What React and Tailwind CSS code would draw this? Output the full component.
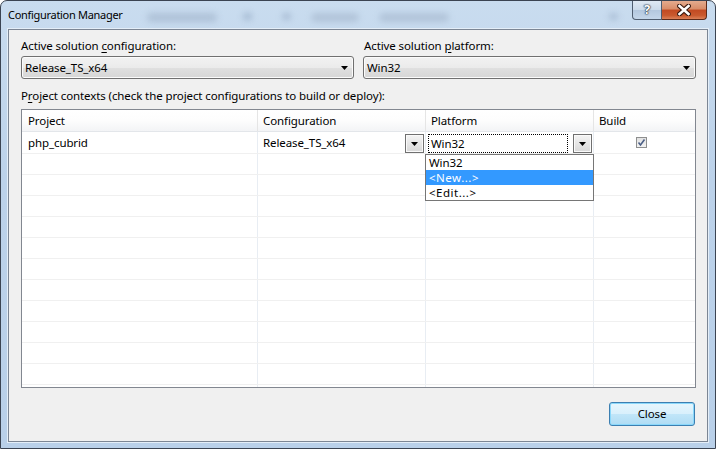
import React from "react";

function Tri() {
  return (
    <svg width="7" height="4" viewBox="0 0 7 4">
      <path d="M0 0H7L3.5 4Z" fill="#000" />
    </svg>
  );
}

function Combo({ value }) {
  return (
    <div className="h-[23px] w-[333px] rounded-[3px] border border-[#707070] bg-[linear-gradient(to_bottom,#f2f2f2_0%,#ebebeb_50%,#e0e0e0_50%,#d6d6d6_100%)] shadow-[inset_0_0_0_1px_#fbfbfb] flex items-center pl-[3px] pr-[5px]">
      <span className="flex-1 leading-[16px]">{value}</span>
      <Tri />
    </div>
  );
}

function CellButton() {
  return (
    <div className="w-[19px] h-[19px] border border-[#707070] bg-[linear-gradient(to_bottom,#f4f4f4_0%,#e6e6e6_50%,#d8d8d8_100%)] shadow-[inset_0_0_0_1px_#fafafa] flex items-center justify-center">
      <Tri />
    </div>
  );
}

export default function App() {
  const rows = Array.from({ length: 12 });
  return (
    <div className="w-[716px] h-[449px] overflow-hidden font-['Noto_Sans','Open_Sans',sans-serif] text-black">
      <div className="w-[716px] h-[449px] flex flex-col rounded-t-[7px] border border-[#3b4452] bg-[linear-gradient(to_bottom,#c9dcef_0%,#bcd2ea_40%,#b9d0e9_100%)] overflow-hidden">
        {/* Title bar */}
        <div className="h-[28px] flex items-start">
          <div className="pl-[7px] pt-[6px] text-[11px] tracking-[-0.3px] leading-[16px] text-black whitespace-nowrap">
            Configuration Manager
          </div>
          <div className="flex items-start pt-[12px] blur-[3px] opacity-60">
            <span className="ml-[24px] w-[70px] h-[9px] bg-[#9fb2c9] rounded-full" />
            <span className="ml-[26px] w-[9px] h-[7px] bg-[#8ea4bf] rounded-full" />
            <span className="ml-[30px] w-[9px] h-[7px] bg-[#94a8c2] rounded-full" />
            <span className="ml-[20px] w-[48px] h-[9px] bg-[#a3b5cb] rounded-full" />
            <span className="ml-[20px] w-[70px] h-[9px] bg-[#a3b5cb] rounded-full" />
            <span className="ml-[160px] w-[9px] h-[7px] bg-[#97abc4] rounded-full" />
          </div>
          <div className="ml-auto mr-[8px] flex">
            <div className="w-[30px] h-[19px] rounded-bl-[4px] border border-t-0 border-[#4f5d70] bg-[linear-gradient(to_bottom,#dfe9f4_0%,#cbdaea_50%,#b3c7de_50%,#c4d6ea_100%)] flex items-center justify-center text-[13px] font-bold text-white [text-shadow:0_0_1px_#1e2a3a,0_0_1px_#1e2a3a,0_0_2px_#1e2a3a]">
              ?
            </div>
            <div className="w-[45px] h-[19px] rounded-br-[4px] border border-l-0 border-t-0 border-[#5b2a1a] bg-[linear-gradient(to_bottom,#e4ab8e_0%,#d88c68_45%,#c24a22_50%,#c9592e_80%,#dc8158_100%)] flex items-center justify-center">
              <svg width="14" height="12" viewBox="0 0 14 12">
                <path d="M2.5 2L11.5 10M11.5 2L2.5 10" stroke="#3a1a10" strokeWidth="4.8" strokeLinecap="square" />
                <path d="M2.5 2L11.5 10M11.5 2L2.5 10" stroke="#ffffff" strokeWidth="2.6" strokeLinecap="square" />
              </svg>
            </div>
          </div>
        </div>

        {/* Middle: frame + client */}
        <div className="flex">
          <div className="w-[7px]" />
          <div className="w-[700px] h-[413px] border border-[#7c8694] bg-[#f0f0f0] shadow-[0_0_0_1px_#e4eef8] pl-[12px] pr-[11px] pt-[8px] flex flex-col text-[11.5px] tracking-[-0.1px] leading-[16px]">
            <div className="flex gap-[9px]">
              <div className="w-[333px]">
                <div className="h-[16px]">
                  Active solution <span className="underline underline-offset-[2px]">c</span>onfiguration:
                </div>
                <div className="mt-[2px]">
                  <Combo value="Release_TS_x64" />
                </div>
              </div>
              <div className="w-[333px]">
                <div className="h-[16px] pl-[1px]">
                  Active solution <span className="underline underline-offset-[2px]">p</span>latform:
                </div>
                <div className="mt-[2px]">
                  <Combo value="Win32" />
                </div>
              </div>
            </div>

            <div className="mt-[9px] h-[16px]">
              P<span className="underline underline-offset-[2px]">r</span>oject contexts (check the project configurations to build or deploy):
            </div>

            {/* Grid */}
            <div className="mt-[5px] h-[279px] border border-[#828790] bg-white overflow-hidden relative">
              <div className="flex h-[22px] border-b border-[#e3e6ea] bg-[linear-gradient(to_bottom,#ffffff_0%,#fdfdfd_50%,#f3f4f6_100%)]">
                <div className="w-[236px] border-r border-[#e5e5e5] pl-[6px] flex items-center">Project</div>
                <div className="w-[168px] border-r border-[#e5e5e5] pl-[5px] flex items-center">Configuration</div>
                <div className="w-[168px] border-r border-[#e5e5e5] pl-[5px] flex items-center">Platform</div>
                <div className="w-[101px] pl-[5px] flex items-center">Build</div>
              </div>
              {/* Row 1 */}
              <div className="flex h-[22px] border-b border-[#f0f0f0]">
                <div className="w-[236px] border-r border-[#e8edf3] pl-[6px] flex items-center">php_cubrid</div>
                <div className="w-[168px] border-r border-[#e8edf3] pl-[5px] flex items-start">
                  <span className="flex-1 pt-[3px]">Release_TS_x64</span>
                  <div className="mt-[2px] mr-[1px]">
                    <CellButton />
                  </div>
                </div>
                <div className="w-[168px] border-r border-[#e8edf3] pl-[2px] flex items-start">
                  <div className="mt-[2px] w-[140px] h-[19px] border border-dotted border-black pl-[2px] flex items-center">
                    Win32
                  </div>
                  <div className="ml-auto mt-[2px] mr-[1px]">
                    <CellButton />
                  </div>
                </div>
                <div className="w-[101px] pl-[42px] pt-[5px]">
                  <div className="w-[11px] h-[11px] border border-[#8e8f8f] bg-[linear-gradient(to_bottom,#e2e2e2,#f2f2f2)] flex items-center justify-center">
                    <svg width="9" height="9" viewBox="0 0 9 9">
                      <path d="M1.5 4.5L3.5 7L7.5 1.5" stroke="#4b5f86" strokeWidth="1.6" fill="none" />
                    </svg>
                  </div>
                </div>
              </div>
              {rows.map((_, i) => (
                <div key={i} className="flex h-[21px] border-b border-[#f0f0f0]">
                  <div className="w-[236px] border-r border-[#e8edf3]" />
                  <div className="w-[168px] border-r border-[#e8edf3]" />
                  <div className="w-[168px] border-r border-[#e8edf3]" />
                  <div className="w-[101px]" />
                </div>
              ))}

              {/* Dropdown list */}
              <div className="absolute left-[403px] top-[44px] w-[169px] h-[47px] border border-[#767676] bg-white text-[11.5px] leading-[15px]">
                <div className="h-[15px] pl-[3px] overflow-hidden">Win32</div>
                <div className="h-[15px] pl-[3px] overflow-hidden bg-[#3399ff] text-white tracking-[0.5px]">&lt;New...&gt;</div>
                <div className="h-[15px] pl-[3px] overflow-hidden tracking-[0.5px]">&lt;Edit...&gt;</div>
              </div>
            </div>

            <div className="mt-[14px] flex justify-end pr-[1px]">
              <div className="w-[86px] h-[24px] rounded-[3px] border border-[#3c7fb1] shadow-[inset_0_0_0_1px_#8ad8fb] bg-[linear-gradient(to_bottom,#e7f6fd_0%,#d8f0fc_50%,#c1e6f9_50%,#afdcf4_100%)] flex items-center justify-center">
                Close
              </div>
            </div>
          </div>
          <div className="w-[7px]" />
        </div>
        <div className="flex-1" />
      </div>
    </div>
  );
}
